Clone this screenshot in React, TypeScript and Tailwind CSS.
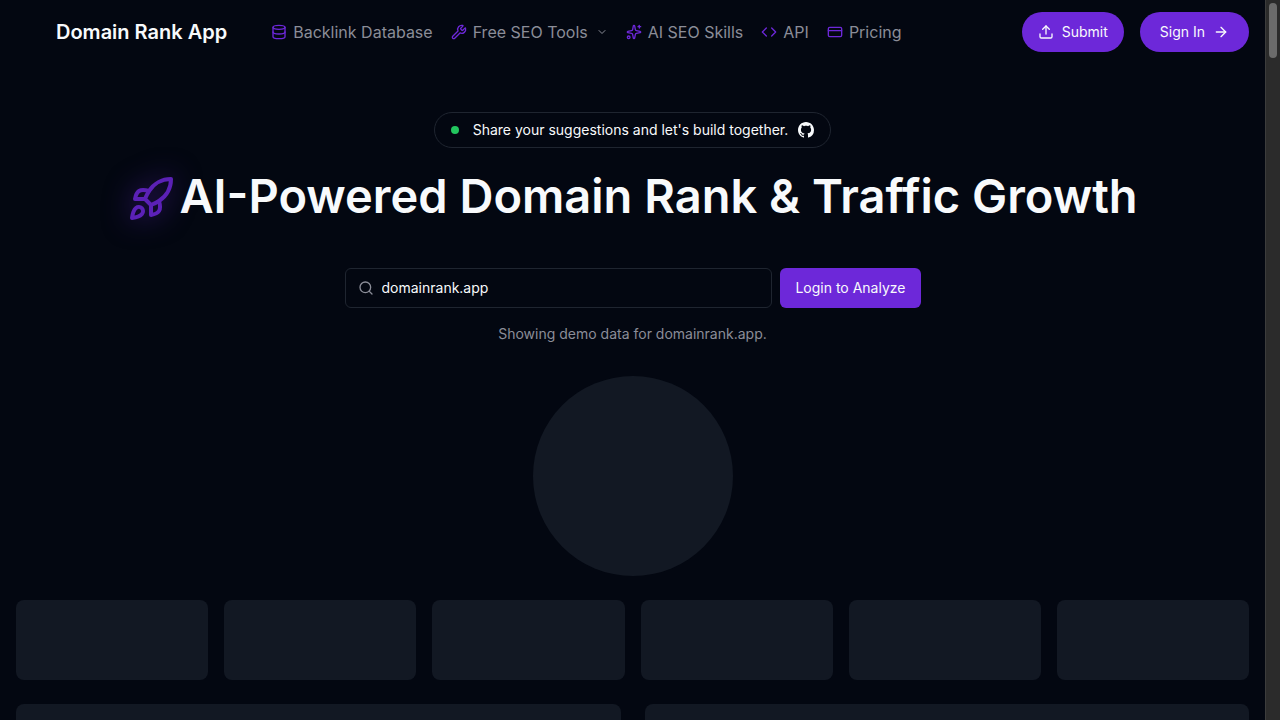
import { useState } from "react";
import {
  ArrowRight,
  ChevronDown,
  Code,
  CreditCard,
  Database,
  Rocket,
  Search,
  Sparkles,
  Upload,
  Wrench,
  type LucideIcon,
} from "lucide-react";

type NavItem = { label: string; icon: LucideIcon; menu?: boolean };

const navItems: NavItem[] = [
  { label: "Backlink Database", icon: Database },
  { label: "Free SEO Tools", icon: Wrench, menu: true },
  { label: "AI SEO Skills", icon: Sparkles },
  { label: "API", icon: Code },
  { label: "Pricing", icon: CreditCard },
];

function GithubMark() {
  return (
    <svg viewBox="0 0 16 16" className="size-4 fill-current" aria-hidden="true">
      <path d="M8 0C3.58 0 0 3.58 0 8c0 3.54 2.29 6.53 5.47 7.59.4.07.55-.17.55-.38 0-.19-.01-.82-.01-1.49-2.01.37-2.53-.49-2.69-.94-.09-.23-.48-.94-.82-1.13-.28-.15-.68-.52-.01-.53.63-.01 1.08.58 1.23.82.72 1.21 1.87.87 2.33.66.07-.52.28-.87.51-1.07-1.78-.2-3.64-.89-3.64-3.95 0-.87.31-1.59.82-2.15-.08-.2-.36-1.02.08-2.12 0 0 .67-.21 2.2.82.64-.18 1.32-.27 2-.27s1.36.09 2 .27c1.53-1.04 2.2-.82 2.2-.82.44 1.1.16 1.92.08 2.12.51.56.82 1.27.82 2.15 0 3.07-1.87 3.75-3.65 3.95.29.25.54.73.54 1.48 0 1.07-.01 1.93-.01 2.2 0 .21.15.46.55.38A8.01 8.01 0 0 0 16 8c0-4.42-3.58-8-8-8z" />
    </svg>
  );
}

function Header() {
  return (
    <header className="flex h-16 items-center justify-between pr-4 pl-14">
      <div className="flex items-center gap-11">
        <a href="#" className="text-xl font-semibold whitespace-nowrap">
          Domain Rank App
        </a>
        <nav className="flex items-center gap-[18px]">
          {navItems.map(({ label, icon: Icon, menu }) => (
            <a
              key={label}
              href="#"
              className="flex items-center gap-1.5 text-base whitespace-nowrap text-[#8b8d98]"
            >
              <Icon className="size-4 text-[#6d28d9]" />
              {label}
              {menu && <ChevronDown className="ml-0.5 size-3" />}
            </a>
          ))}
        </nav>
      </div>
      <div className="flex items-center gap-4 text-sm">
        <button className="flex h-10 items-center gap-2 rounded-full bg-[#6d28d9] px-4">
          <Upload className="size-4" />
          Submit
        </button>
        <button className="flex h-10 items-center gap-2 rounded-full bg-[#6d28d9] px-5">
          Sign In
          <ArrowRight className="size-4" />
        </button>
      </div>
    </header>
  );
}

function Hero() {
  const [domain, setDomain] = useState("domainrank.app");
  return (
    <section className="flex flex-col items-center pt-12">
      <a
        href="#"
        className="flex h-9 items-center rounded-full border border-[#1f2530] px-4 text-sm"
      >
        <span className="mr-3.5 size-2 rounded-full bg-[#22c55e]" />
        <span className="mr-2.5">Share your suggestions and let's build together.</span>
        <GithubMark />
      </a>
      <h1 className="mt-5 flex items-center text-[47px] leading-14 font-semibold whitespace-nowrap">
        <Rocket className="mt-1.5 mr-1 size-12 text-[#5b21b6] drop-shadow-[0_0_14px_#6d28d980]" />
        AI-Powered Domain Rank &amp; Traffic Growth
      </h1>
      <form
        className="mt-11 flex w-full max-w-xl gap-2 text-sm"
        onSubmit={(event) => event.preventDefault()}
      >
        <label className="flex h-10 flex-1 items-center gap-2 rounded-md border border-[#1f2530] px-3">
          <Search className="size-4 shrink-0 text-[#8b8d98]" />
          <input
            aria-label="Domain"
            className="w-full bg-transparent outline-none"
            value={domain}
            onChange={(event) => setDomain(event.target.value)}
          />
        </label>
        <button className="h-10 rounded-md bg-[#6d28d9] px-[15px] whitespace-nowrap">
          Login to Analyze
        </button>
      </form>
      <p className="mt-4 text-sm text-[#8b8d98]">Showing demo data for domainrank.app.</p>
    </section>
  );
}

function Skeletons() {
  return (
    <section className="flex flex-col gap-6 px-4 pt-8" aria-busy="true">
      <div className="mx-auto size-50 rounded-full bg-[#121823]" />
      <div className="grid grid-cols-6 gap-4">
        {[0, 1, 2, 3, 4, 5].map((item) => (
          <div key={item} className="h-20 rounded-lg bg-[#121823]" />
        ))}
      </div>
      <div className="grid grid-cols-2 gap-6">
        <div className="h-64 rounded-lg bg-[#121823]" />
        <div className="h-64 rounded-lg bg-[#121823]" />
      </div>
    </section>
  );
}

export default function App() {
  return (
    <div className="flex h-screen overflow-hidden bg-[#030711] font-['Inter',sans-serif] text-[#f8fafc]">
      <div className="min-w-0 flex-1">
        <Header />
        <main>
          <Hero />
          <Skeletons />
        </main>
      </div>
      <div className="w-[15px] border-l border-[#3c3c3c] bg-[#2b2b2b] px-[3px] pt-[3px]">
        <div className="h-[55px] rounded-full bg-[#6b6b6b]" />
      </div>
    </div>
  );
}
